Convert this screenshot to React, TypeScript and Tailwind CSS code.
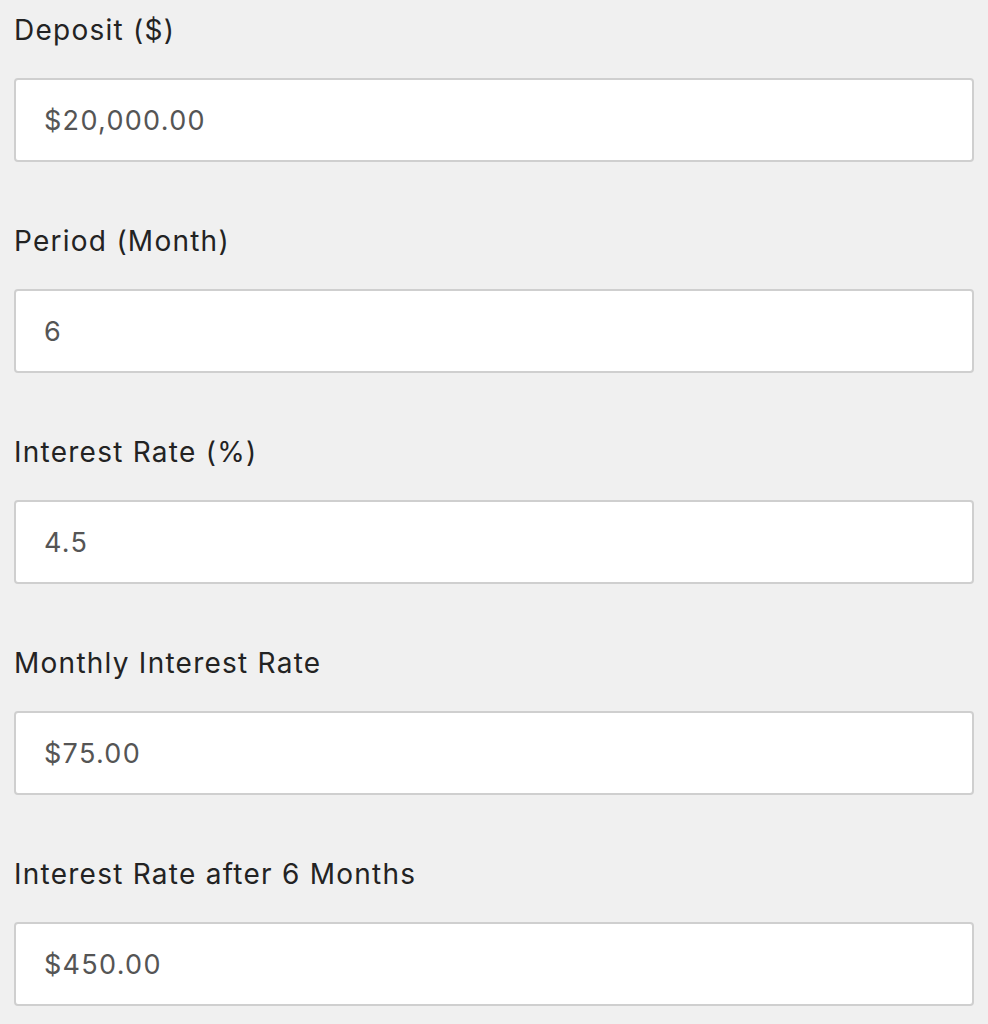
const fields = [
  { label: "Deposit ($)", value: "$20,000.00" },
  { label: "Period (Month)", value: "6" },
  { label: "Interest Rate (%)", value: "4.5" },
  { label: "Monthly Interest Rate", value: "$75.00" },
  { label: "Interest Rate after 6 Months", value: "$450.00" },
];

export default function App() {
  return (
    <div className="min-h-[1024px] w-[988px] bg-[#f0f0f0] pl-[14px] pr-[14px] pt-[10px] font-['Inter',sans-serif]">
      <div className="flex flex-col gap-[59px]">
        {fields.map((f) => (
          <div key={f.label} className="flex flex-col gap-[28px]">
            <label className="h-[40px] text-[28px] leading-[40px] tracking-[1.25px] text-[#232323]">{f.label}</label>
            <input
              readOnly
              value={f.value}
              className="h-[84px] w-full rounded-[4px] border-2 border-[#cfcfcf] bg-white px-[28px] text-[27px] tracking-[1.3px] text-[#555] outline-none"
            />
          </div>
        ))}
      </div>
    </div>
  );
}
